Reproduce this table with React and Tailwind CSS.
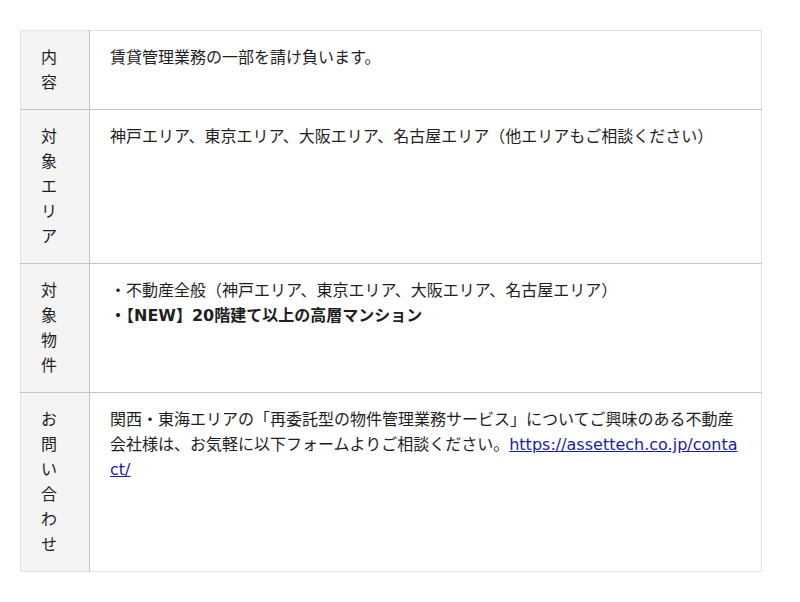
import React from 'react'

const rows = [
  {
    label: '内容',
    body: <p>賃貸管理業務の一部を請け負います。</p>,
  },
  {
    label: '対象エリア',
    body: <p>神戸エリア、東京エリア、大阪エリア、名古屋エリア（他エリアもご相談ください）</p>,
  },
  {
    label: '対象物件',
    body: (
      <>
        <p>・不動産全般（神戸エリア、東京エリア、大阪エリア、名古屋エリア）</p>
        <p className="font-bold">・【NEW】20階建て以上の高層マンション</p>
      </>
    ),
  },
  {
    label: 'お問い合わせ',
    body: (
      <p className="break-all">
        関西・東海エリアの「再委託型の物件管理業務サービス」についてご興味のある不動産会社様は、お気軽に以下フォームよりご相談ください。
        <a href="#" className="text-[#1c1ca0] underline">https://assettech.co.jp/contact/</a>
      </p>
    ),
  },
]

export default function App() {
  return (
    <div className="bg-white min-h-[602px] px-5 pt-[30px] text-[16px] leading-[25px] text-[#1e1e1e] font-['DejaVu_Sans','Noto_Sans_CJK_JP',sans-serif]">
      <table className="w-[742px] border-collapse border border-[#e3e3e3]">
        <tbody>
          {rows.map((row, i) => (
            <tr key={i} className="border-b border-[#c4c4c4] last:border-b-[#e3e3e3]">
              {/* Narrow label column: one character per line */}
              <th className="w-[69px] px-5 py-[14px] bg-[#f4f4f4] border-r border-[#c4c4c4] font-normal text-left align-top break-all">
                {row.label}
              </th>
              <td className="px-5 py-[14px] align-top">{row.body}</td>
            </tr>
          ))}
        </tbody>
      </table>
    </div>
  )
}
